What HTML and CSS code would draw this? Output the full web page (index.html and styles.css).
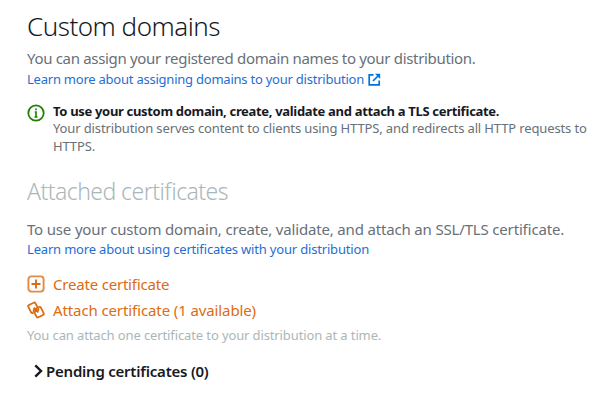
FILE: index.html
```
<!DOCTYPE html>
<html lang="en">
<head>
<meta charset="utf-8">
<title>Custom domains</title>
<link rel="stylesheet" href="styles.css">
</head>
<body>
<main class="page">
  <section>
    <h1 class="title">Custom domains</h1>
    <p class="lead lead-domains">You can assign your registered domain names to your distribution.</p>
    <a class="link link-domains"><span>Learn more about assigning domains to your distribution</span>
      <svg class="external" viewBox="0 0 13 13" fill="none" stroke="currentColor" stroke-width="1.7"><path d="M5.5 1.8H1.2v10h10V7.5M5 8l6-6"/><path d="M7 .8H12.2v5.2z" fill="currentColor" stroke="none"/></svg></a>
  </section>
  <div class="notice">
    <svg class="icon" viewBox="0 0 18 18" fill="none" stroke="currentColor"><circle cx="9" cy="9" r="7.7" stroke-width="1.8"/><path d="M9 4.4v1.9M7.7 8H9v5M7.5 13h3" stroke-width="1.6"/></svg>
    <div>
      <p class="notice-title">To use your custom domain, create, validate and attach a TLS certificate.</p>
      <p class="notice-text">Your distribution serves content to clients using HTTPS, and redirects all HTTP requests to HTTPS.</p>
    </div>
  </div>
  <section>
    <h2 class="subtitle">Attached certificates</h2>
    <p class="lead lead-certs">To use your custom domain, create, validate, and attach an SSL/TLS certificate.</p>
    <a class="link link-certs">Learn more about using certificates with your distribution</a>
    <div class="actions">
      <a class="action action-create"><svg class="icon" viewBox="0 0 18 18" fill="none" stroke="currentColor"><rect x="1.4" y="1.4" width="15.2" height="15.2" rx="3" stroke-width="1.9" opacity=".8"/><path d="M9 4.5v9M4.5 9h9" stroke-width="1.9"/></svg>Create certificate</a>
      <a class="action action-attach"><svg class="icon" viewBox="0 0 18 18" fill="none" stroke="currentColor" stroke-width="1.8"><path transform="translate(6.3 6.8) rotate(-27)" d="M-2 4.4h-.6A1.4 1.4 0 0 1-4 3v-6A1.4 1.4 0 0 1-2.6-4.4h5.2A1.4 1.4 0 0 1 4-3v6a1.4 1.4 0 0 1-1.4 1.4H.6V0"/><path transform="translate(11.7 11.2) rotate(153)" d="M-2 4.4h-.6A1.4 1.4 0 0 1-4 3v-6A1.4 1.4 0 0 1-2.6-4.4h5.2A1.4 1.4 0 0 1 4-3v6a1.4 1.4 0 0 1-1.4 1.4H.6V0"/></svg>Attach certificate (1 available)</a>
    </div>
    <p class="note">You can attach one certificate to your distribution at a time.</p>
    <div class="pending"><svg class="chevron" viewBox="0 0 9 14" fill="none" stroke="currentColor" stroke-width="2.4"><path d="m1.3 1.3 5.7 5.7-5.7 5.7"/></svg><span>Pending certificates (0)</span></div>
  </section>
</main>
</body>
</html>
```
FILE: styles.css
```
body { margin: 0; background: #fff; font-family: "Noto Sans", sans-serif; font-feature-settings: "liga" 1; color: #16191f; }
h1, h2, p { margin: 0; font-weight: 400; }
.page { padding: 10px 20px 0 27px; white-space: nowrap; }
.title { font-size: 26px; line-height: 32px; font-weight: 300; letter-spacing: -0.5px; }
.lead { font-size: 15px; line-height: 22px; color: #687078; }
.lead-domains { margin-top: 5px; letter-spacing: -0.32px; }
.link { display: flex; align-items: center; gap: 4px; font-size: 13px; line-height: 20px; color: #1f6ed4; }
.link-domains { letter-spacing: -0.23px; }
.link-certs { margin-top: -1px; letter-spacing: -0.18px; }
.external { width: 13px; height: 13px; color: #0073dc; }
.icon { width: 18px; height: 18px; flex: none; }
.notice { display: flex; gap: 8px; margin-top: 15px; color: #1d8102; }
.notice-title { font-size: 13px; line-height: 15px; font-weight: 700; letter-spacing: -0.32px; color: #16191f; }
.notice-text { width: 540px; font-size: 13px; line-height: 18px; letter-spacing: -0.13px; white-space: normal; color: #687078; }
.subtitle { margin-top: 22px; font-size: 23px; line-height: 28px; font-weight: 300; letter-spacing: -0.55px; color: #aab7b8; }
.lead-certs { margin-top: 13px; letter-spacing: -0.17px; }
.actions { margin-top: 12px; }
.action { display: flex; align-items: center; gap: 8px; font-size: 15px; line-height: 26px; color: #dd6b10; }
.action-create { letter-spacing: -0.2px; }
.action-attach { letter-spacing: -0.11px; }
.note { margin-top: 2px; font-size: 13px; line-height: 20px; letter-spacing: -0.12px; color: #aab7b8; }
.pending { display: flex; align-items: center; gap: 3px; margin: 15px 0 0 7px; font-size: 15px; line-height: 22px; font-weight: 600; letter-spacing: -0.23px; }
.chevron { width: 9px; height: 14px; }
```
